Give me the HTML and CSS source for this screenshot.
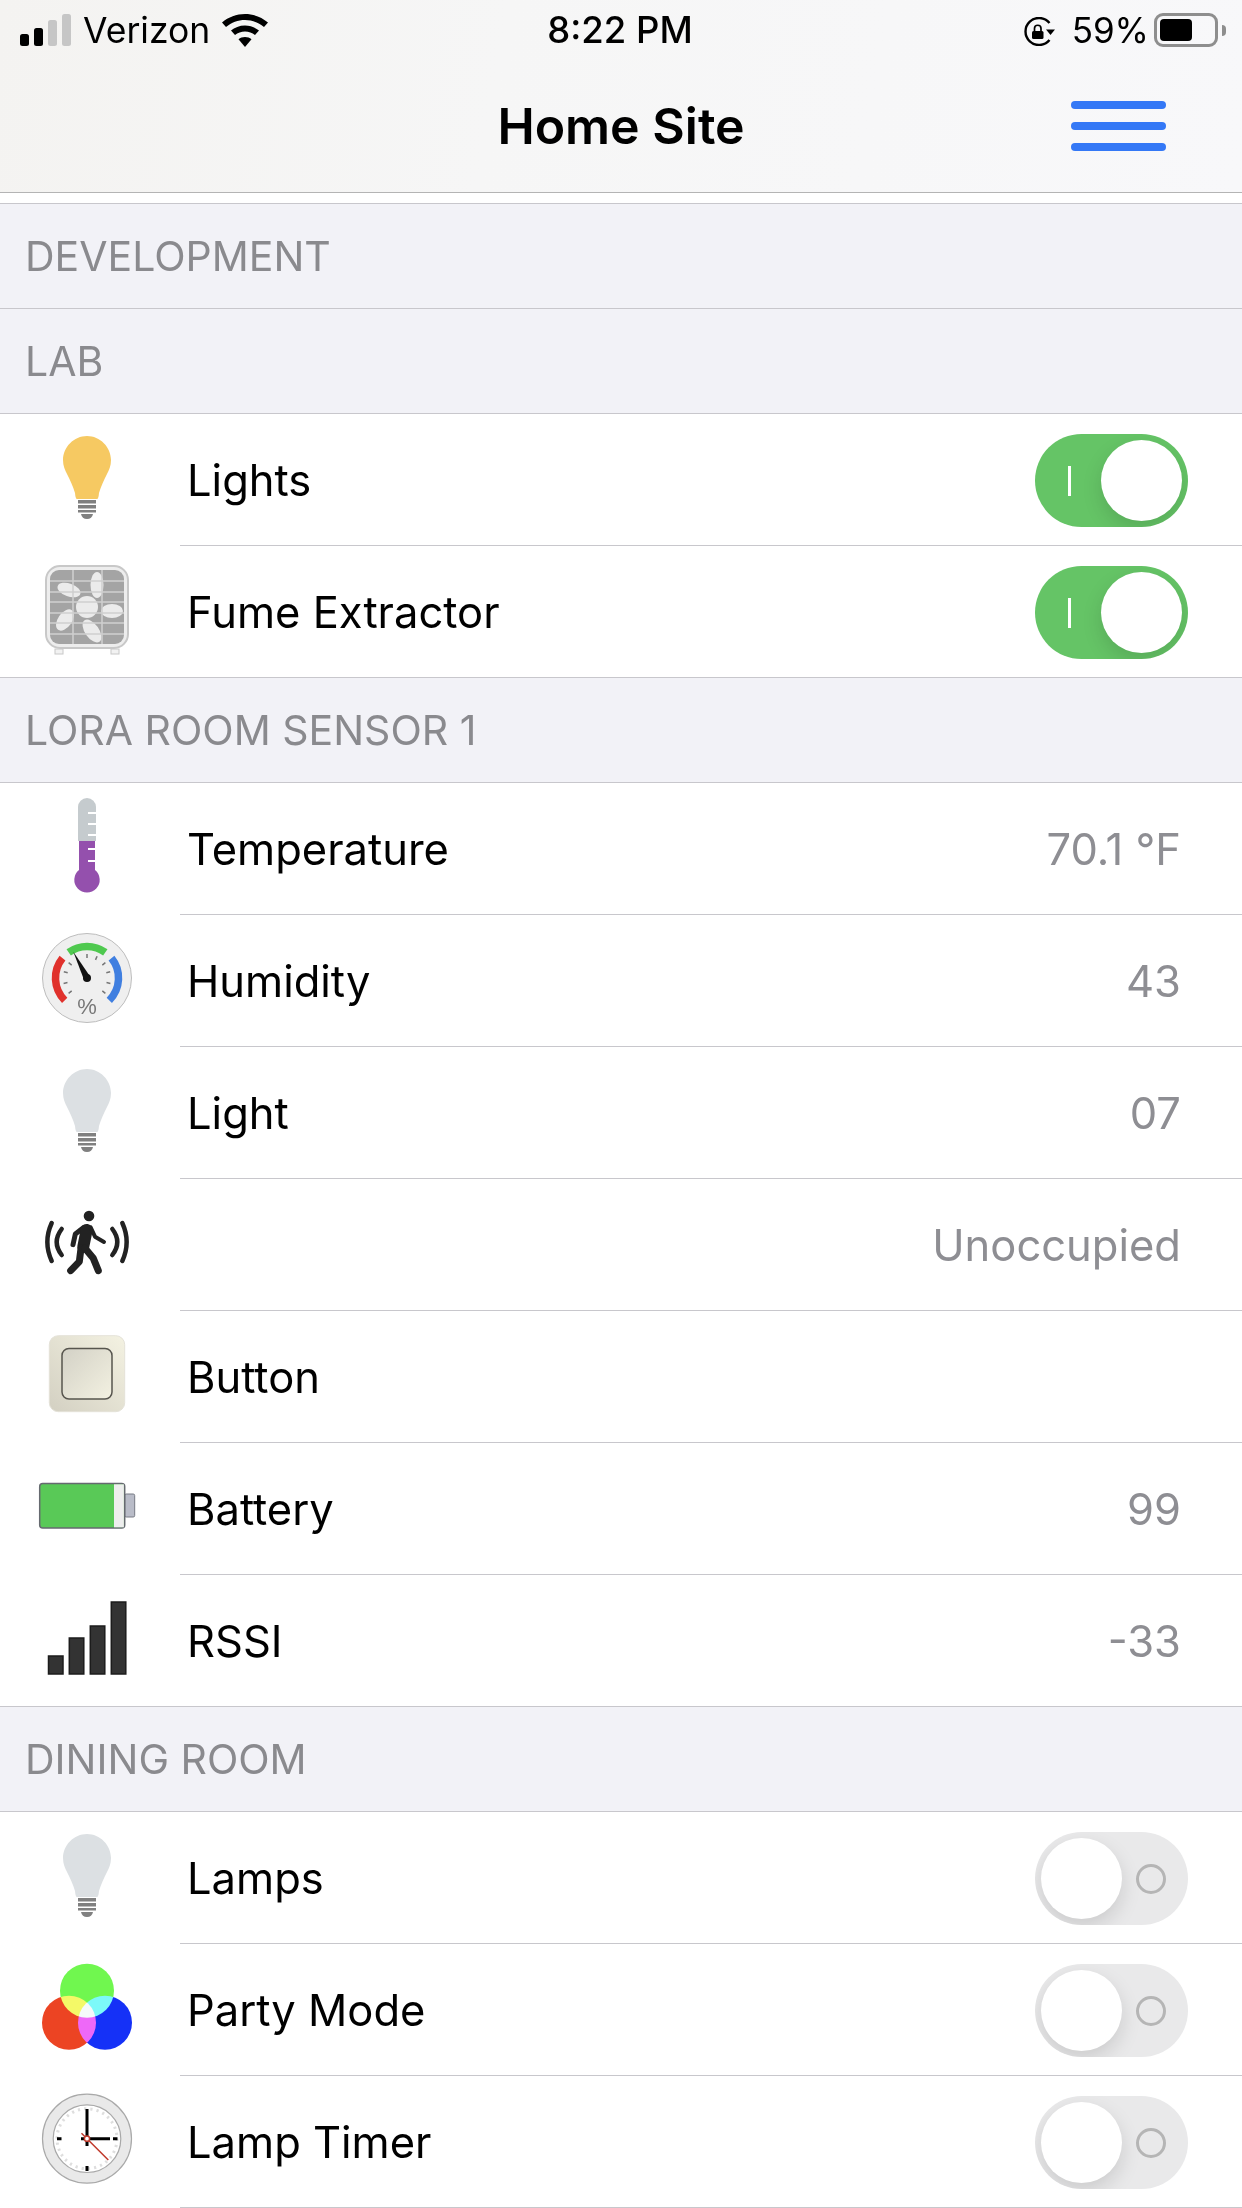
FILE: index.html
```html
<!DOCTYPE html>
<html>
<head>
<meta charset="utf-8">
<title>Home Site</title>
<link rel="stylesheet" href="styles.css">
</head>
<body>
<svg class="defs" width="0" height="0">
	<defs>
		<symbol id="bulb" viewBox="0 0 90 91" overflow="visible">
			<path fill="currentColor" d="M45 2C58 2 69 13 69 26C69 32 67 36 65 40C62 46 59 52 57 59Q56.500 65 55 65L35 65Q33.500 65 33 59C31 52 28 46 25 40C23 36 21 32 21 26C21 13 32 2 45 2Z"/>
			<path fill="#808080" d="M36 66H54V69.500H36ZM36 71H54V74.500H36ZM36 76H54V78.500H36ZM39 80H51Q50 85 45 85Q40 85 39 80Z"/>
		</symbol>
		<linearGradient id="plate" x1="0" y1="1" x2="1" y2="0">
			<stop offset="0" stop-color="#d3d0c2"/>
			<stop offset="1" stop-color="#f4f2e2"/>
		</linearGradient>
		<linearGradient id="key" x1="0" y1="0" x2="1" y2="1">
			<stop offset="0" stop-color="#d3d1c6"/>
			<stop offset="1" stop-color="#f3f1e1"/>
		</linearGradient>
	</defs>
</svg>

<header class="top">
	<div class="status">
		<div class="status-left">
			<span class="signal"><i class="on s1"></i><i class="on s2"></i><i class="s3"></i><i class="s4"></i></span>
			<span class="carrier">Verizon</span>
			<svg class="wifi" viewBox="0 0 46 33"><path d="M23 0C31.500 0 39.500 3 46 8.500L42 13C36.500 8.500 30 6 23 6C16 6 9.500 8.500 4 13L0 8.500C6.500 3 14.500 0 23 0Z"/><path d="M23 11.500C28.500 11.500 33.500 13.500 37 16.500L33 21C30.200 18.800 26.800 17.500 23 17.500C19.200 17.500 15.800 18.800 13 21L9 16.500C12.500 13.500 17.500 11.500 23 11.500Z"/><path d="M23 23C25.500 23 27.800 23.800 29.500 25.300L23 33L16.500 25.300C18.200 23.800 20.500 23 23 23Z"/></svg>
		</div>
		<div class="clock">8:22 PM</div>
		<div class="status-right">
			<svg class="lock" viewBox="0 0 32 29"><path d="M26.500 6A13.500 13.500 0 1 0 26.500 23" fill="none" stroke="#000" stroke-width="2.400"/><path d="M23 12.500H32L27.500 18Z"/><rect x="9" y="14" width="11.500" height="8" rx="1.500"/><path d="M11.500 14V11.500A3.200 3.200 0 0 1 18 11.500V14" fill="none" stroke="#000" stroke-width="1.700"/></svg>
			<span class="pct">59%</span>
			<span class="batt"><i class="batt-fill"></i></span>
			<i class="batt-nub"></i>
		</div>
	</div>
	<nav class="nav">
		<h1 class="title">Home Site</h1>
		<div class="menu"><i></i><i></i><i></i></div>
	</nav>
</header>

<main class="list">
	<div class="head">Development</div>
	<div class="head">Lab</div>

	<div class="row">
		<div class="ico"><svg><use href="#bulb" class="lit"/></svg></div>
		<div class="body"><span>Lights</span><div class="toggle on"><i class="mark"></i><i class="knob"></i></div></div>
	</div>
	<div class="row last">
		<div class="ico">
			<svg viewBox="0 0 90 91">
				<rect x="4" y="0" width="82" height="82" rx="14" fill="#ededed" stroke="#c8c8c8" stroke-width="2"/>
				<rect x="8" y="4" width="74" height="74" rx="9" fill="#a4a4a4"/>
				<rect x="13" y="83" width="8" height="5" fill="#f2f2f2" stroke="#c8c8c8"/>
				<rect x="69" y="83" width="8" height="5" fill="#f2f2f2" stroke="#c8c8c8"/>
				<g fill="#ebebeb">
					<ellipse cx="55" cy="19" rx="6.500" ry="13"/>
					<ellipse cx="27" cy="24" rx="12" ry="6.500" transform="rotate(20 27 24)"/>
					<ellipse cx="23" cy="54" rx="7" ry="12" transform="rotate(35 23 54)"/>
					<ellipse cx="50" cy="65" rx="7" ry="13" transform="rotate(-35 50 65)"/>
					<ellipse cx="70" cy="45" rx="11" ry="7"/>
					<circle cx="45" cy="41" r="11"/>
				</g>
				<path fill="none" stroke="#cfcfcf" stroke-width="1.500" d="M31 4V78M60 4V78M8 15H82M8 26H82M8 36H82M8 47H82M8 57H82M8 68H82"/>
			</svg>
		</div>
		<div class="body"><span>Fume Extractor</span><div class="toggle on"><i class="mark"></i><i class="knob"></i></div></div>
	</div>

	<div class="head">LoRa Room Sensor 1</div>

	<div class="row">
		<div class="ico">
			<svg viewBox="0 0 90 91">
				<path fill="#c5cbce" d="M36 38V4A9 9 0 0 1 54 4V38Z"/>
				<path fill="#9450ad" d="M37 38H53V67A12.700 12.700 0 1 1 37 67Z"/>
				<path stroke="#fff" stroke-width="2" d="M46 10H54M46 21H54M46 32H54M46 46H54M46 58H54"/>
			</svg>
		</div>
		<div class="body"><span>Temperature</span><span class="val">70.1 °F</span></div>
	</div>
	<div class="row">
		<div class="ico">
			<svg viewBox="0 0 90 91">
				<circle cx="45" cy="43" r="44.500" fill="#efefef" stroke="#bdbdbd" stroke-width="1"/>
				<g fill="none" stroke-width="7.500">
					<path stroke="#e0312c" d="M20.500 23.200A31.500 31.500 0 0 0 22.700 65.300"/>
					<path stroke="#4fc94f" d="M26.700 17.400A31.500 31.500 0 0 1 63.300 17.400"/>
					<path stroke="#407fe0" d="M69.500 23.200A31.500 31.500 0 0 1 67.300 65.300"/>
				</g>
				<g transform="translate(45 43)">
					<path fill="none" stroke="#777" stroke-width="1.500" d="M0-20V-24M8.500-18.100L10.100-21.800M15.300-12.900L18.400-15.400M19.300-5.200L23.200-6.200M19.500 4.500L23.400 5.400M15.300 12.900L18.400 15.400M-15.300-12.900L-18.400-15.400M-19.300-5.200L-23.200-6.200M-19.500 4.500L-23.400 5.400M-15.300 12.900L-18.400 15.400"/>
					<path fill="#111" d="M-13.700-26.300L3.100-1.600L-3.100 1.600Z"/>
					<circle r="4" fill="#111"/>
					<text class="gauge-text" y="35.500" text-anchor="middle">%</text>
				</g>
			</svg>
		</div>
		<div class="body"><span>Humidity</span><span class="val">43</span></div>
	</div>
	<div class="row">
		<div class="ico"><svg><use href="#bulb" class="dim"/></svg></div>
		<div class="body"><span>Light</span><span class="val">07</span></div>
	</div>
	<div class="row">
		<div class="ico">
			<svg viewBox="0 0 90 91">
				<g fill="none" stroke="#222" stroke-linecap="round">
					<path stroke-width="4.500" d="M9.700 24Q1 43 9.700 62M80.300 24Q89 43 80.300 62"/>
					<path stroke-width="4.500" d="M19.700 30Q9.700 43 19.700 56M70.300 30Q80.300 43 70.300 56"/>
					<g transform="translate(-42 -19) scale(.3333)" stroke-linejoin="round">
						<path stroke-width="15" d="M252 142L226 162L219 194"/>
						<path stroke-width="36" d="M260 150L250 200"/>
						<path stroke-width="12" d="M272 142L285 170L312 186"/>
						<path stroke-width="21" d="M243 205L238 245L212 272"/>
						<path stroke-width="21" d="M255 205L280 235L295 272"/>
					</g>
				</g>
				<circle cx="47" cy="17" r="5.300" fill="#222"/>
			</svg>
		</div>
		<div class="body"><span></span><span class="val">Unoccupied</span></div>
	</div>
	<div class="row">
		<div class="ico">
			<svg viewBox="0 0 90 91">
				<rect x="7.300" y="4.700" width="75.400" height="76" rx="9" fill="url(#plate)" stroke="#e4e2d8"/>
				<rect x="20" y="17.500" width="50" height="50.500" rx="7" fill="url(#key)" stroke="#57554e" stroke-width="1.500"/>
			</svg>
		</div>
		<div class="body"><span>Button</span></div>
	</div>
	<div class="row">
		<div class="ico">
			<svg viewBox="0 0 90 91">
				<rect x="82.700" y="31" width="10" height="23" rx="1.500" fill="#b9bcc8" stroke="#777b84"/>
				<rect x="-2.300" y="20.500" width="85" height="44.500" rx="3" fill="#59c957" stroke="#666a70" stroke-width="1.500"/>
				<rect x="72" y="21.300" width="9.900" height="43" fill="#eeeeee"/>
			</svg>
		</div>
		<div class="body"><span>Battery</span><span class="val">99</span></div>
	</div>
	<div class="row last">
		<div class="ico">
			<svg viewBox="0 0 90 91">
				<g fill="#333" stroke="#1c1c1c" stroke-width="1.500">
					<rect x="6.500" y="61" width="14.500" height="18"/>
					<rect x="27.300" y="43" width="14.500" height="36"/>
					<rect x="48.300" y="31" width="14.500" height="48"/>
					<rect x="69.300" y="7" width="14.500" height="72"/>
				</g>
			</svg>
		</div>
		<div class="body"><span>RSSI</span><span class="val">-33</span></div>
	</div>

	<div class="head">Dining Room</div>

	<div class="row">
		<div class="ico"><svg><use href="#bulb" class="dim"/></svg></div>
		<div class="body"><span>Lamps</span><div class="toggle"><i class="knob"></i><i class="mark"></i></div></div>
	</div>
	<div class="row">
		<div class="ico">
			<svg viewBox="0 0 90 91">
				<g class="rgb">
					<circle cx="45" cy="26.700" r="27" fill="#70f74f"/>
					<circle cx="27" cy="58.700" r="27" fill="#ec4423"/>
					<circle cx="63" cy="58.700" r="27" fill="#1531f7"/>
				</g>
			</svg>
		</div>
		<div class="body"><span>Party Mode</span><div class="toggle"><i class="knob"></i><i class="mark"></i></div></div>
	</div>
	<div class="row">
		<div class="ico">
			<svg viewBox="0 0 90 91">
				<circle cx="45" cy="42.700" r="44.500" fill="#e9e9e9" stroke="#a9a9a9" stroke-width="1.200"/>
				<circle cx="45" cy="42.700" r="33.800" fill="#fff" stroke="#a9a9a9" stroke-width="1.200"/>
				<circle cx="45" cy="42.700" r="30" fill="none" stroke="#dedede" stroke-width="3" stroke-dasharray="2.200 4.083"/>
				<path stroke="#000" stroke-width="3" d="M45 13V50M39 42.700H68M15 42.700H19.500M71 42.700H75.500M45 70V75"/>
				<path stroke="#c0392b" stroke-width="1.500" d="M39.500 37.200L66.300 64"/>
				<circle cx="45" cy="42.700" r="2.600" fill="#fff" stroke="#c0392b" stroke-width="1.500"/>
			</svg>
		</div>
		<div class="body"><span>Lamp Timer</span><div class="toggle"><i class="knob"></i><i class="mark"></i></div></div>
	</div>
</main>
</body>
</html>
```

FILE: styles.css
```css
* {box-sizing: border-box;}
html, body {margin: 0; padding: 0;}
body {
	width: 1242px;
	height: 2208px;
	overflow: hidden;
	background: #fff;
	font-family: Inter, "Liberation Sans", sans-serif;
	color: #000;
}
i {display: block;}
.defs {position: absolute;}

/* top bar */
.top {
	height: 193px;
	border-bottom: 1px solid #b4b4b4;
	background: linear-gradient(100deg, #f4f3f1 0%, #f6f6f6 40%, #f8f8fa 100%);
}
.status {
	display: grid;
	grid-template-columns: 1fr auto 1fr;
	align-items: center;
	height: 60px;
	font-size: 35px;
}
.status-left {display: flex; align-items: center; padding-left: 20px;}
.status-right {display: flex; align-items: center; justify-content: flex-end; padding-right: 16px;}
.signal {display: flex; align-items: flex-end; gap: 5px; height: 32px;}
.signal i {width: 9px; background: #c6c6c6; border-radius: 2.500px;}
.signal .on {background: #000;}
.s1 {height: 12px;}
.s2 {height: 18px;}
.s3 {height: 26px;}
.s4 {height: 32px;}
.carrier {margin-left: 12px; font-size: 35.500px;}
.wifi {width: 46px; height: 33px; margin-left: 12px;}
.clock {font-size: 36.500px; font-weight: 500; margin-left: -2px;}
.lock {width: 32px; height: 29px; margin-top: 3px;}
.pct {margin-left: 17px;}
.batt {
	display: block;
	width: 64px;
	height: 34px;
	margin-left: 5px;
	padding: 3px;
	border: 3px solid #8e8e8e;
	border-radius: 9px;
}
.batt-fill {width: 32px; height: 22px; background: #000; border-radius: 4px;}
.batt-nub {width: 4px; height: 11px; margin-left: 4px; background: #8e8e8e; border-radius: 0 4px 4px 0;}

.nav {
	display: grid;
	grid-template-columns: 1fr auto 1fr;
	align-items: center;
	height: 132px;
}
.title {grid-column: 2; margin: 0; font-size: 50px; font-weight: 600;}
.menu {
	display: flex;
	flex-direction: column;
	justify-self: end;
	gap: 13.500px;
	width: 95px;
	margin-right: 76px;
}
.menu i {height: 7.500px; background: #3478f6; border-radius: 4px;}

/* list */
.list {margin-top: 10px; border-top: 1px solid #c8c7cc;}
.head {
	display: flex;
	align-items: center;
	height: 105px;
	padding: 0 0 1px 25px;
	background: #f2f2f7;
	border-bottom: 1px solid #c8c7cc;
	color: #8a8a8e;
	font-size: 41px;
	text-transform: uppercase;
}
.row {display: flex; height: 132px; background: #fff;}
.ico {
	display: flex;
	flex: none;
	align-items: center;
	justify-content: center;
	width: 174px;
	margin-right: 6px;
	border-bottom: 1px solid transparent;
}
.ico svg {display: block; width: 90px; height: 91px; overflow: visible;}
.body {
	display: flex;
	flex: 1;
	align-items: center;
	justify-content: space-between;
	padding: 0 54px 0 7px;
	border-bottom: 1px solid #c8c7cc;
	font-size: 43.500px;
}
.row.last {border-bottom: 1px solid #c8c7cc;}
.row.last .ico {border-bottom: 0;}
.row.last .body {border-bottom: 0;}
.val {margin-right: 7px; color: #8e8e93;}
.lit {color: #f6c962;}
.dim {color: #dce0e3;}
.gauge-text {font-family: "Liberation Sans", sans-serif; font-size: 22px; fill: #777;}
.rgb {isolation: isolate;}
.rgb circle {mix-blend-mode: screen;}

/* switches */
.toggle {
	display: flex;
	flex: none;
	align-items: center;
	width: 153px;
	height: 93px;
	margin-top: 2px;
	padding: 6px;
	overflow: hidden;
	background: #e9e9ea;
	border-radius: 47px;
}
.toggle.on {justify-content: flex-end; background: #65c466;}
.knob {
	flex: none;
	width: 81px;
	height: 81px;
	background: #fff;
	border-radius: 50%;
	box-shadow: 0 8px 20px rgba(0, 0, 0, .13);
}
.mark {
	flex: none;
	width: 30px;
	height: 30px;
	margin-left: 14px;
	border: 3px solid #b5b5b5;
	border-radius: 50%;
}
.toggle.on .mark {
	width: 3px;
	margin: 0 auto 0 27px;
	background: #fff;
	border: 0;
	border-radius: 0;
}
```
